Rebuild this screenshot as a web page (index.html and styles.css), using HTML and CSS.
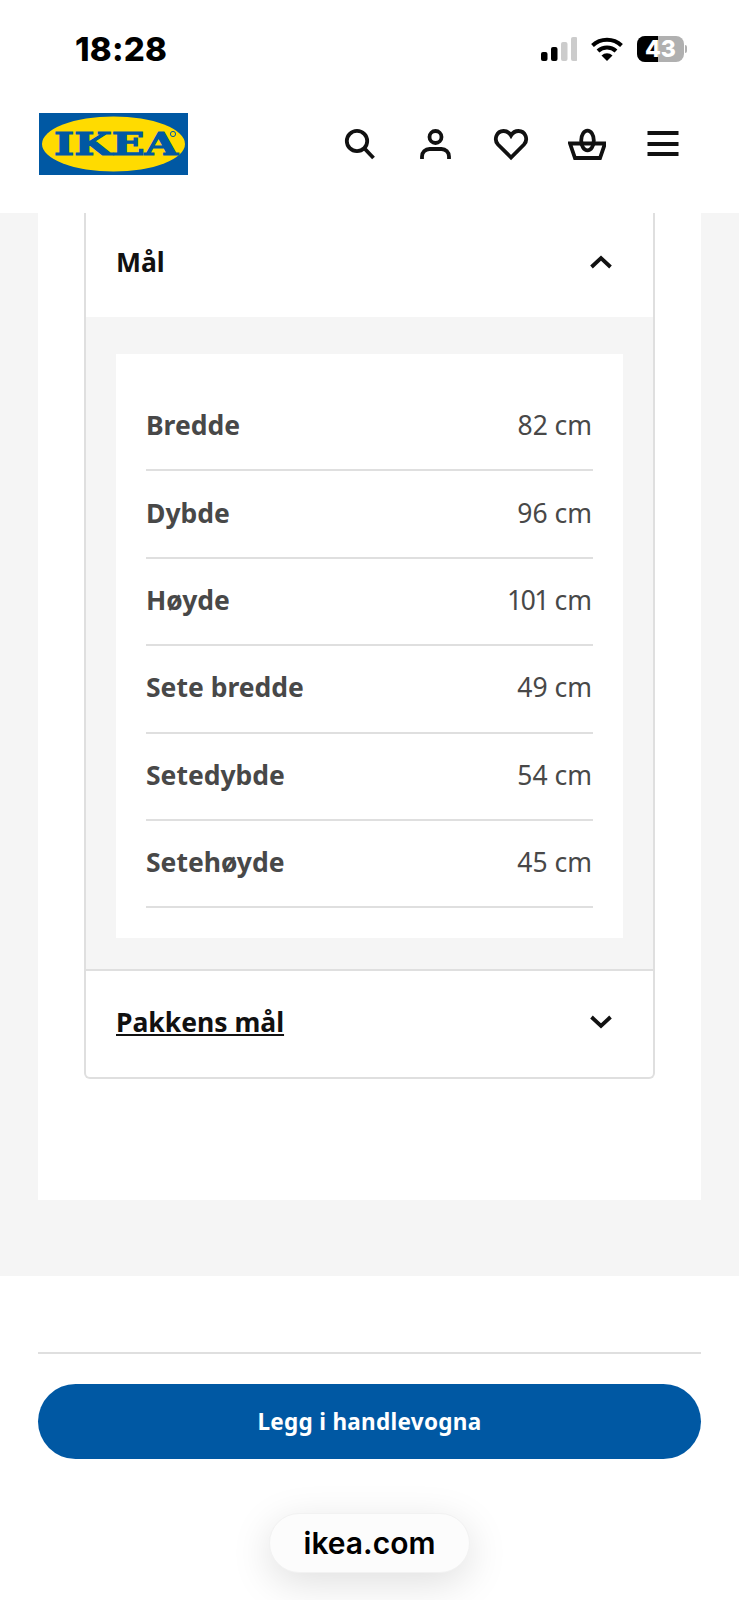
FILE: index.html
```html
<!DOCTYPE html>
<html lang="nb">
<head>
    <meta charset="UTF-8">
    <meta name="viewport" content="width=device-width, initial-scale=1.0">
    <title>IKEA - Mål</title>
    <link rel="stylesheet" href="styles.css">
</head>
<body>
    <header class="top">
        <div class="status">
            <span class="time">18:28</span>
            <div class="status-icons">
                <svg class="signal" width="36" height="24" viewBox="0 0 36 24">
                    <rect x="0" y="15" width="6.5" height="9" rx="2" fill="#000"/>
                    <rect x="10" y="10" width="6.5" height="14" rx="2" fill="#000"/>
                    <rect x="20" y="5" width="6.5" height="19" rx="2" fill="#ccc"/>
                    <rect x="30" y="0" width="6.5" height="24" rx="2" fill="#ccc"/>
                </svg>
                <svg class="wifi" width="32" height="24" viewBox="0 0 32 24">
                    <path d="M1.5 8.5 A21 21 0 0 1 30.5 8.5" fill="none" stroke="#000" stroke-width="4"/>
                    <path d="M7 14 A13 13 0 0 1 25 14" fill="none" stroke="#000" stroke-width="4"/>
                    <path d="M16 24 L10.5 18.5 A8 8 0 0 1 21.5 18.5 Z" fill="#000"/>
                </svg>
                <div class="battery">
                    <div class="battery-fill"></div>
                    <span class="battery-text">43</span>
                    <div class="battery-nub"></div>
                </div>
            </div>
        </div>
        <nav class="nav">
            <svg class="logo" width="149" height="62" viewBox="0 0 149 62">
                <rect width="149" height="62" fill="#0058a3"/>
                <ellipse cx="74.5" cy="31" rx="71.5" ry="27.5" fill="#ffdb00"/>
                <text class="logo-text" x="15" y="42" textLength="124" lengthAdjust="spacingAndGlyphs">IKEA</text>
                <circle cx="134" cy="21" r="2.6" fill="#ffdb00" stroke="#0058a3" stroke-width="1"/>
            </svg>
            <div class="nav-icons">
                <svg class="icon" viewBox="0 0 38 38">
                    <circle cx="17" cy="16" r="10.2"/>
                    <path d="M24.5 23.5 L33.5 33"/>
                </svg>
                <svg class="icon" viewBox="0 0 38 38">
                    <circle cx="19.5" cy="12" r="6"/>
                    <path d="M6 34 V31.5 A7.5 7.5 0 0 1 13.5 24 H25.5 A7.5 7.5 0 0 1 33 31.5 V34"/>
                </svg>
                <svg class="icon" viewBox="0 0 38 38">
                    <path d="M19 32.5 L6 19.5 C1.5 14.5 4.5 6 11.5 6 C15 6 17.5 8 19 10.5 C20.5 8 23 6 26.5 6 C33.5 6 36.5 14.5 32 19.5 Z"/>
                </svg>
                <svg class="icon" viewBox="0 0 38 38">
                    <path d="M2 18.5 H37 L32 33 H7 Z"/>
                    <ellipse cx="19.5" cy="15.5" rx="6.3" ry="9.8"/>
                </svg>
                <svg class="icon" viewBox="0 0 38 38">
                    <path d="M3.5 8 H34.5 M3.5 19 H34.5 M3.5 29 H34.5"/>
                </svg>
            </div>
        </nav>
    </header>

    <main class="page">
        <section class="panel">
            <div class="card">
                <div class="card-head">
                    <span class="card-title">Mål</span>
                    <svg class="chevron" width="24" height="14" viewBox="0 0 24 14"><path d="M2.5 12 L12 3 L21.5 12"/></svg>
                </div>
                <div class="card-body">
                    <dl class="specs">
                        <div class="spec"><dt>Bredde</dt><dd>82 cm</dd></div>
                        <div class="spec"><dt>Dybde</dt><dd>96 cm</dd></div>
                        <div class="spec"><dt>Høyde</dt><dd>101 cm</dd></div>
                        <div class="spec"><dt>Sete bredde</dt><dd>49 cm</dd></div>
                        <div class="spec"><dt>Setedybde</dt><dd>54 cm</dd></div>
                        <div class="spec"><dt>Setehøyde</dt><dd>45 cm</dd></div>
                    </dl>
                </div>
                <div class="card-foot">
                    <a class="card-title card-link" href="#">Pakkens mål</a>
                    <svg class="chevron" width="24" height="14" viewBox="0 0 24 14"><path d="M2.5 2 L12 11 L21.5 2"/></svg>
                </div>
            </div>
        </section>
    </main>

    <footer class="footer">
        <div class="footer-line"></div>
        <button class="buy">Legg i handlevogna</button>
        <div class="url-pill">ikea.com</div>
    </footer>
</body>
</html>
```

FILE: styles.css
```css
* {
    box-sizing: border-box;
}
html, body {
    margin: 0;
    padding: 0;
}
body {
    width: 739px;
    height: 1600px;
    overflow: hidden;
    background-color: #fff;
    font-family: "Noto Sans", sans-serif;
    color: #111;
}

/* status bar + header */
.top {
    height: 213px;
    background-color: #fff;
}
.status {
    height: 98px;
    padding: 0 55px 0 75px;
    display: flex;
    align-items: center;
    justify-content: space-between;
}
.time {
    font-family: Inter, sans-serif;
    font-size: 33px;
    font-weight: 800;
    letter-spacing: 0.2px;
    color: #000;
}
.status-icons {
    display: flex;
    align-items: center;
    gap: 14px;
}
.battery {
    position: relative;
    width: 47px;
    height: 26px;
    border-radius: 8px;
    background-color: #b0b0b0;
}
.battery-fill {
    width: 21px;
    height: 26px;
    background-color: #000;
    border-radius: 8px 0 0 8px;
}
.battery-text {
    position: absolute;
    left: 0;
    right: 0;
    top: 0;
    line-height: 26px;
    text-align: center;
    font-family: Inter, sans-serif;
    font-size: 23px;
    font-weight: 800;
    color: #fff;
}
.battery-nub {
    position: absolute;
    left: 48px;
    top: 9px;
    width: 2px;
    height: 8px;
    border-radius: 0 2px 2px 0;
    background-color: #b0b0b0;
}
.nav {
    padding: 15px 57px 0 39px;
    display: flex;
    align-items: flex-start;
    justify-content: space-between;
}
.logo {
    display: block;
}
.logo-text {
    font-family: "DejaVu Serif", serif;
    font-weight: 700;
    font-size: 31px;
    fill: #0058a3;
    stroke: #0058a3;
    stroke-width: 1.1;
}
.nav-icons {
    display: flex;
    gap: 38px;
    padding-top: 12px;
}
.icon {
    display: block;
    width: 38px;
    height: 38px;
    fill: none;
    stroke: #111;
    stroke-width: 3.8;
}

/* grey page + white panel */
.page {
    height: 1063px;
    padding: 0 38px;
    background-color: #f5f5f5;
}
.panel {
    height: 987px;
    padding: 0 46px;
    background-color: #fff;
}
.card {
    border: 2px solid #dfdfdf;
    border-top: none;
    border-radius: 0 0 6px 6px;
}
.card-head {
    height: 104px;
    padding: 0 30px 6px;
    display: flex;
    align-items: center;
    justify-content: space-between;
}
.card-foot {
    height: 108px;
    padding: 0 30px 4px;
    display: flex;
    align-items: center;
    justify-content: space-between;
    border-top: 2px solid #dfdfdf;
}
.card-title {
    font-size: 26.5px;
    font-weight: 700;
    color: #111;
}
.card-link {
    text-decoration: underline;
}
.chevron {
    margin-right: 10px;
    fill: none;
    stroke: #111;
    stroke-width: 3.8;
}
.card-body {
    padding: 37px 30px 31px;
    background-color: #f5f5f5;
}
.specs {
    margin: 0;
    padding: 30px 30px 30px;
    background-color: #fff;
}
.spec {
    height: 87.4px;
    padding-bottom: 3px;
    display: flex;
    align-items: center;
    justify-content: space-between;
    border-bottom: 2px solid #dfdfdf;
    font-size: 26.5px;
    color: #484848;
}
.spec dt {
    font-weight: 700;
}
.spec dd {
    margin: 0 1px 0 0;
    font-variant-numeric: proportional-nums;
}

/* bottom bar */
.footer {
    position: relative;
    height: 324px;
    padding: 76px 38px 0;
    background-color: #fff;
}
.footer-line {
    height: 2px;
    background-color: #dfdfdf;
}
.buy {
    display: block;
    width: 100%;
    height: 75px;
    margin-top: 30px;
    padding-bottom: 2px;
    border: none;
    border-radius: 38px;
    background-color: #0058a3;
    color: #fff;
    font-family: "Noto Sans", sans-serif;
    font-size: 22.5px;
    font-weight: 700;
    letter-spacing: 0.3px;
}
.url-pill {
    position: absolute;
    left: 269px;
    top: 237px;
    width: 201px;
    height: 60px;
    border: 1px solid #f2f2f2;
    border-radius: 30px;
    background-color: #fcfcfc;
    box-shadow: 0 10px 40px rgba(0, 0, 0, 0.13);
    font-family: Inter, sans-serif;
    font-size: 30px;
    font-weight: 600;
    line-height: 58px;
    text-align: center;
    color: #000;
}
```
